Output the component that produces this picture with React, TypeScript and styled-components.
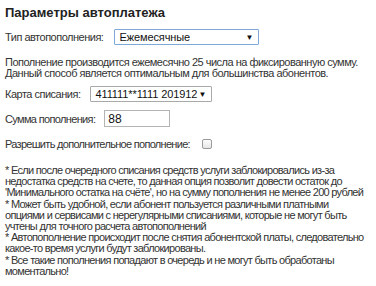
import React from "react";
import styled, { createGlobalStyle } from "styled-components";

const Global = createGlobalStyle`
  html, body { margin: 0; padding: 0; background: #fff; }
  body { font-family: "Liberation Sans", Arial, sans-serif; color: #333; }
`;

const Page = styled.div`
  padding: 5px 5px 0 5px;
  font-size: 11px;
  letter-spacing: -0.5px;
`;

const Title = styled.h2`
  margin: 0 0 9px 0;
  font-size: 13px;
  font-weight: bold;
  color: #222;
  line-height: 15px;
  letter-spacing: 0;
`;

const Row = styled.div<{ $gap: number; $mb: number; $h: number }>`
  display: flex;
  align-items: center;
  height: ${(p) => p.$h}px;
  gap: ${(p) => p.$gap}px;
  margin-bottom: ${(p) => p.$mb}px;
  white-space: nowrap;
`;

const Label = styled.span<{ $ls?: number }>`
  white-space: nowrap;
  letter-spacing: ${(p) => (p.$ls ?? -0.5)}px;
`;

const SelectBox = styled.div<{ $w: number; $focus?: boolean }>`
  box-sizing: border-box;
  width: ${(p) => p.$w}px;
  height: 16px;
  border: 1px solid ${(p) => (p.$focus ? "#7ea8d8" : "#a9a9a9")};
  border-radius: 1px;
  background: #fff;
  display: flex;
  align-items: center;
  justify-content: space-between;
  padding: 0 5px 0 4px;
  font-size: 11px;
  letter-spacing: -0.1px;
  color: #111;
  white-space: nowrap;
`;

const Arrow = styled.span`
  font-size: 8px;
  letter-spacing: 0;
  color: #111;
`;

const Input = styled.div`
  box-sizing: border-box;
  width: 66px;
  height: 17px;
  border: 1px solid #b4b4b4;
  padding: 0 3px;
  display: flex;
  align-items: center;
  font-size: 12px;
  letter-spacing: 0;
  color: #111;
`;

const Check = styled.span`
  box-sizing: border-box;
  width: 10px;
  height: 10px;
  border: 1px solid #9a9a9a;
  border-radius: 2px;
  background: linear-gradient(#fdfdfd, #e6e6e6);
`;

const Para = styled.p<{ $mb: number; $lh: number; $ls: number }>`
  margin: 0 0 ${(p) => p.$mb}px 0;
  line-height: ${(p) => p.$lh}px;
  letter-spacing: ${(p) => p.$ls}px;
  white-space: nowrap;
`;

export default function App() {
  return (
    <>
      <Global />
      <Page>
        <Title>Параметры автоплатежа</Title>
        <Row $gap={11} $mb={12} $h={16}>
          <Label>Тип автопополнения:</Label>
          <SelectBox $w={145} $focus>
            <span>Ежемесячные</span>
            <Arrow>▼</Arrow>
          </SelectBox>
        </Row>
        <Para $mb={8} $lh={10.5} $ls={-0.5}>
          Пополнение производится ежемесячно 25 числа на фиксированную сумму.
          <br />
          Данный способ является оптимальным для большинства абонентов.
        </Para>
        <Row $gap={10} $mb={8} $h={16}>
          <Label>Карта списания:</Label>
          <SelectBox $w={122}>
            <span>411111**1111 201912</span>
            <Arrow>▼</Arrow>
          </SelectBox>
        </Row>
        <Row $gap={9} $mb={10} $h={17}>
          <Label $ls={-0.65}>Сумма пополнения:</Label>
          <Input>88</Input>
        </Row>
        <Row $gap={12} $mb={15} $h={13}>
          <Label $ls={-0.7}>Разрешить дополнительное пополнение:</Label>
          <Check />
        </Row>
        <Para $mb={0} $lh={11.2} $ls={-0.7}>
          * Если после очередного списания средств услуги заблокировались из-за
          <br />
          недостатка средств на счете, то данная опция позволит довести остаток до
          <br />
          'Минимального остатка на счёте', но на сумму пополнения не менее 200 рублей
          <br />
          * Может быть удобной, если абонент пользуется различными платными
          <br />
          опциями и сервисами с нерегулярными списаниями, которые не могут быть
          <br />
          учтены для точного расчета автопополнений
          <br />
          * Автопополнение происходит после снятия абонентской платы, следовательно
          <br />
          какое-то время услуги будут заблокированы.
          <br />
          * Все такие пополнения попадают в очередь и не могут быть обработаны
          <br />
          моментально!
        </Para>
      </Page>
    </>
  );
}
